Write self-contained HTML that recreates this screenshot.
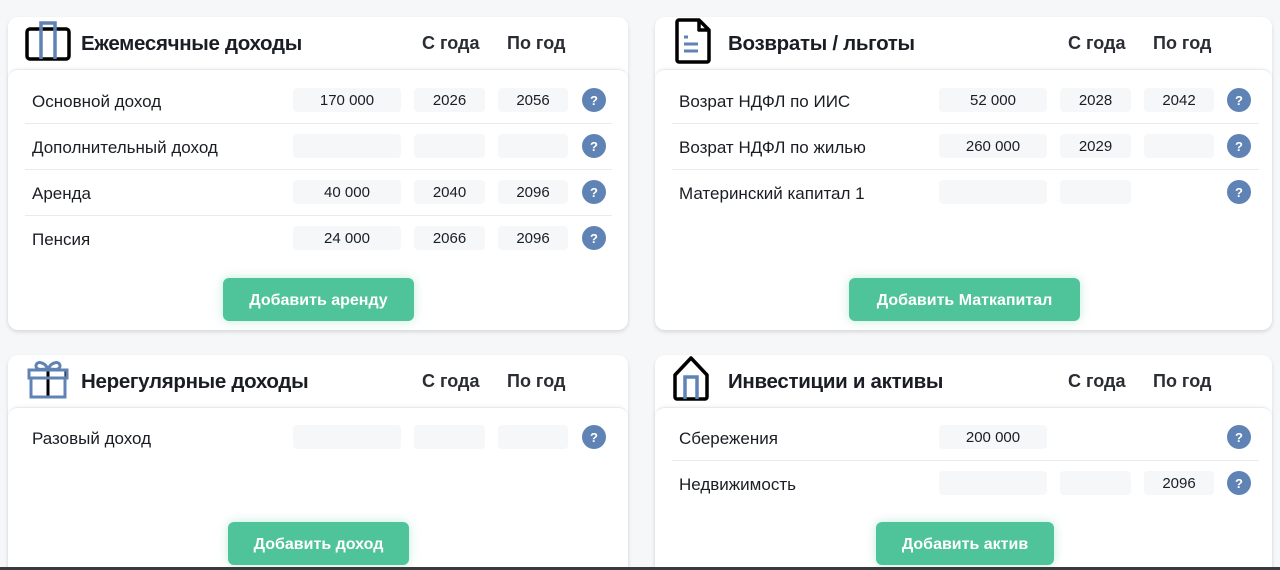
<!DOCTYPE html>
<html><head><meta charset="utf-8"><style>
*{box-sizing:border-box;margin:0;padding:0}
html,body{width:1280px;height:570px;overflow:hidden}
body{background:#f6f7f9;font-family:"Liberation Sans","Noto Sans CJK SC",sans-serif;color:#1a1d24;position:relative}
.card{position:absolute;background:#fff;border-radius:10px;box-shadow:0 2px 4px rgba(0,0,0,.12)}
.body{position:absolute;left:0;right:0;top:52px;bottom:0;border-top:1px solid #e6e9ee;border-radius:10px;box-shadow:0 -1px 3px rgba(0,0,0,.05)}
.title{position:absolute;left:73px;top:15px;font-size:20.5px;line-height:24px;font-weight:bold;letter-spacing:-0.3px}
.hc{position:absolute;top:15px;font-size:18px;line-height:22px;font-weight:bold;color:#2a2d33}
.lbl{position:absolute;left:24px;font-size:17px;line-height:20px;margin-top:-8px}
.inp{position:absolute;height:24px;background:#f6f7f9;border-radius:4px;font-size:15px;text-align:center;line-height:26px;margin-top:-12px}
.q{position:absolute;left:574px;width:24px;height:24px;border-radius:50%;background:#5f83b5;color:#fff;font-weight:bold;font-size:13px;text-align:center;line-height:25px;margin-top:-12px}
.sep{position:absolute;left:17px;width:587px;height:1px;background:#e8ebef}
.btn{position:absolute;height:43px;background:#4fc49a;border-radius:6px;color:#fff;font-weight:bold;font-size:16px;text-align:center;line-height:45px;box-shadow:0 0 10px rgba(79,196,154,.35)}
svg{position:absolute}
</style></head><body>

<div class="card" style="left:8px;top:17px;width:620px;height:313px">
<svg style="left:14px;top:2px" width="52" height="42" viewBox="0 0 52 42"><rect x="5" y="10" width="42" height="30" rx="3" fill="none" stroke="#000" stroke-width="3.5"/><path d="M19 40V4h14v36" fill="none" stroke="#5f83b5" stroke-width="3.5"/></svg>
<div class="body"></div>
<div class="title">Ежемесячные доходы</div>
<div class="hc" style="left:414px">С года</div>
<div class="hc" style="left:499px">По год</div>
<div class="lbl" style="top:83px">Основной доход</div>
<div class="inp" style="left:285px;top:83px;width:108px">170 000</div>
<div class="inp" style="left:406px;top:83px;width:71px">2026</div>
<div class="inp" style="left:490px;top:83px;width:70px">2056</div>
<div class="q" style="top:83px">?</div>
<div class="sep" style="top:106px"></div>
<div class="lbl" style="top:129px">Дополнительный доход</div>
<div class="inp" style="left:285px;top:129px;width:108px"></div>
<div class="inp" style="left:406px;top:129px;width:71px"></div>
<div class="inp" style="left:490px;top:129px;width:70px"></div>
<div class="q" style="top:129px">?</div>
<div class="sep" style="top:152px"></div>
<div class="lbl" style="top:175px">Аренда</div>
<div class="inp" style="left:285px;top:175px;width:108px">40 000</div>
<div class="inp" style="left:406px;top:175px;width:71px">2040</div>
<div class="inp" style="left:490px;top:175px;width:70px">2096</div>
<div class="q" style="top:175px">?</div>
<div class="sep" style="top:198px"></div>
<div class="lbl" style="top:221px">Пенсия</div>
<div class="inp" style="left:285px;top:221px;width:108px">24 000</div>
<div class="inp" style="left:406px;top:221px;width:71px">2066</div>
<div class="inp" style="left:490px;top:221px;width:70px">2096</div>
<div class="q" style="top:221px">?</div>
<div class="btn" style="left:215px;top:261px;width:191px">Добавить аренду</div>
</div>

<div class="card" style="left:655px;top:17px;width:617px;height:313px">
<svg style="left:18px;top:0px" width="40" height="48" viewBox="0 0 40 48"><path d="M6 3h20l10 10v30a2 2 0 0 1-2 2H6a2 2 0 0 1-2-2V5a2 2 0 0 1 2-2z M26 3v10h10" fill="none" stroke="#000" stroke-width="3.5" stroke-linejoin="round"/><path d="M11 20h4M11 27h14M11 34h14" stroke="#5f83b5" stroke-width="3"/></svg>
<div class="body"></div>
<div class="title">Возвраты / льготы</div>
<div class="hc" style="left:413px">С года</div>
<div class="hc" style="left:498px">По год</div>
<div class="lbl" style="top:83px">Возрат НДФЛ по ИИС</div>
<div class="inp" style="left:284px;top:83px;width:108px">52 000</div>
<div class="inp" style="left:405px;top:83px;width:71px">2028</div>
<div class="inp" style="left:489px;top:83px;width:70px">2042</div>
<div class="q" style="left:572px;top:83px">?</div>
<div class="sep" style="top:106px"></div>
<div class="lbl" style="top:129px">Возрат НДФЛ по жилью</div>
<div class="inp" style="left:284px;top:129px;width:108px">260 000</div>
<div class="inp" style="left:405px;top:129px;width:71px">2029</div>
<div class="inp" style="left:489px;top:129px;width:70px"></div>
<div class="q" style="left:572px;top:129px">?</div>
<div class="sep" style="top:152px"></div>
<div class="lbl" style="top:175px">Материнский капитал 1</div>
<div class="inp" style="left:284px;top:175px;width:108px"></div>
<div class="inp" style="left:405px;top:175px;width:71px"></div>
<div class="q" style="left:572px;top:175px">?</div>
<div class="btn" style="left:194px;top:261px;width:231px">Добавить Маткапитал</div>
</div>

<div class="card" style="left:8px;top:355px;width:620px;height:230px">
<svg style="left:17px;top:4px" width="46" height="40" viewBox="0 0 46 40"><path d="M23 10c-4-8-12-8-12-3s8 3 12 3c4 0 12 2 12-3s-8-5-12 3" fill="none" stroke="#5f83b5" stroke-width="3"/><path d="M5 11h36v8" fill="none" stroke="#000" stroke-width="3"/><path d="M23 11v27" stroke="#000" stroke-width="3"/><rect x="4" y="11" width="38" height="8" fill="none" stroke="#5f83b5" stroke-width="3"/><rect x="6" y="19" width="34" height="19" fill="none" stroke="#5f83b5" stroke-width="3"/></svg>
<div class="body"></div>
<div class="title">Нерегулярные доходы</div>
<div class="hc" style="left:414px">С года</div>
<div class="hc" style="left:499px">По год</div>
<div class="lbl" style="top:82px">Разовый доход</div>
<div class="inp" style="left:285px;top:82px;width:108px"></div>
<div class="inp" style="left:406px;top:82px;width:71px"></div>
<div class="inp" style="left:490px;top:82px;width:70px"></div>
<div class="q" style="top:82px">?</div>
<div class="btn" style="left:220px;top:167px;width:181px">Добавить доход</div>
</div>

<div class="card" style="left:655px;top:355px;width:617px;height:230px">
<svg style="left:16px;top:0px" width="40" height="46" viewBox="0 0 40 46"><path d="M4 20L20 3l16 17v22a2 2 0 0 1-2 2H6a2 2 0 0 1-2-2z" fill="none" stroke="#000" stroke-width="3.5" stroke-linejoin="round"/><path d="M14 44V22h12v22" fill="none" stroke="#5f83b5" stroke-width="3.5"/></svg>
<div class="body"></div>
<div class="title">Инвестиции и активы</div>
<div class="hc" style="left:413px">С года</div>
<div class="hc" style="left:498px">По год</div>
<div class="lbl" style="top:82px">Сбережения</div>
<div class="inp" style="left:284px;top:82px;width:108px">200 000</div>
<div class="q" style="left:572px;top:82px">?</div>
<div class="sep" style="top:105px"></div>
<div class="lbl" style="top:128px">Недвижимость</div>
<div class="inp" style="left:284px;top:128px;width:108px"></div>
<div class="inp" style="left:405px;top:128px;width:71px"></div>
<div class="inp" style="left:489px;top:128px;width:70px">2096</div>
<div class="q" style="left:572px;top:128px">?</div>
<div class="btn" style="left:221px;top:167px;width:178px">Добавить актив</div>
</div>

<div style="position:absolute;left:0;top:567px;width:1280px;height:3px;background:#3a3a3a"></div>
</body></html>
